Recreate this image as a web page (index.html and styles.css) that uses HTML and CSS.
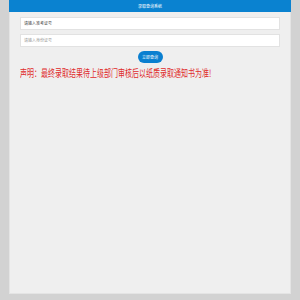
FILE: index.html
```html
<!DOCTYPE html>
<html lang="zh-CN">
<head>
<meta charset="utf-8">
<link rel="stylesheet" href="styles.css">
</head>
<body>
<div class="page">
  <div class="header">录取查询系统</div>
  <div class="form">
    <div class="field dark">请输入准考证号</div>
    <div class="field">请输入身份证号</div>
    <div class="btn-row"><span class="btn">立即查询</span></div>
    <div class="notice"><span class="notice-text">声明：最终录取结果待上级部门审核后以纸质录取通知书为准!</span></div>
  </div>
</div>
</body>
</html>
```
FILE: styles.css
```css
html, body {
  margin: 0;
  padding: 0;
  background: #d2d2d2;
  font-family: "Noto Sans CJK SC", "Liberation Sans", sans-serif;
}
.page {
  margin: 0 9px;
  height: 294px;
  box-sizing: border-box;
  background: #efefef;
  border: 1px solid #e4e4e4;
  border-top: none;
  display: flex;
  flex-direction: column;
}
.header {
  height: 12px;
  margin: 0 -1px;
  background: #0a82d0;
  color: #fff;
  font-size: 4px;
  line-height: 12px;
  text-align: center;
}
.form {
  padding: 5px 10px 0;
  display: flex;
  flex-direction: column;
  gap: 4px;
}
.field {
  height: 13px;
  box-sizing: border-box;
  background: #fff;
  border: 1px solid #e2e2e2;
  font-size: 4px;
  line-height: 11px;
  padding-left: 3px;
  color: #9a9a9a;
}
.field.dark { color: #444; }
.btn-row {
  display: flex;
  justify-content: center;
  padding-top: 0;
}
.btn {
  width: 25px;
  height: 12px;
  border-radius: 6px;
  background: #0a7fd0;
  color: #fff;
  font-size: 4px;
  line-height: 12px;
  text-align: center;
}
.notice {
  height: 12px;
  font-size: 10px;
  line-height: 12px;
  color: #e02a2a;
}
.notice-text {
  display: inline-block;
  vertical-align: top;
  white-space: nowrap;
  font-size: 10px;
  line-height: 12px;
  transform: scaleX(0.7);
  transform-origin: left center;
}
```
